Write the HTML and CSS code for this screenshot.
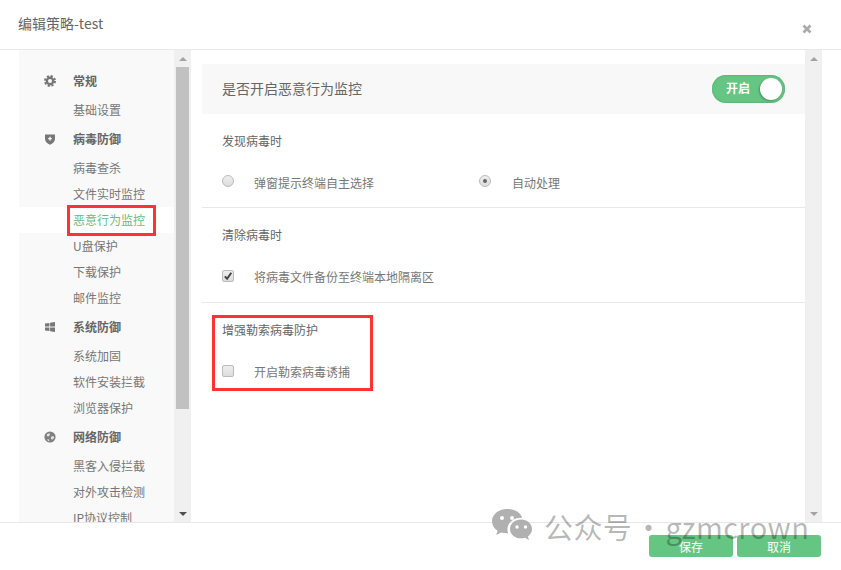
FILE: index.html
```html
<!DOCTYPE html>
<html lang="zh-CN">
<head>
    <meta charset="UTF-8">
    <title>编辑策略-test</title>
    <link rel="stylesheet" href="styles.css">
</head>
<body>
    <div class="dialog">
        <header class="dialog-head">
            <h1>编辑策略-test</h1>
            <svg class="close" viewBox="0 0 10 10" width="10" height="10"><path d="M1.5 1.5l7 7M8.5 1.5l-7 7"/></svg>
        </header>

        <div class="dialog-body">
            <nav class="nav">
                <div class="nav-head">
                    <svg class="nav-icon" viewBox="0 0 12 12"><circle cx="6" cy="6" r="3.2" fill="none" stroke="#777" stroke-width="2.4"/><circle cx="6" cy="6" r="5" fill="none" stroke="#777" stroke-width="2" stroke-dasharray="2.2 1.73"/></svg>
                    常规
                </div>
                <div class="nav-item">基础设置</div>
                <div class="nav-head">
                    <svg class="nav-icon" viewBox="0 0 12 12"><path fill="#777" d="M1 1.6h10v4.2c0 3-2.4 4.8-5 5.9-2.6-1.100-5-2.900-5-5.900z"/><path stroke="#f9f9f9" stroke-width="1.400" d="M6 3.800v3.600M4.200 5.600h3.600"/></svg>
                    病毒防御
                </div>
                <div class="nav-item">病毒查杀</div>
                <div class="nav-item">文件实时监控</div>
                <div class="nav-item active">恶意行为监控</div>
                <div class="nav-item">U盘保护</div>
                <div class="nav-item">下载保护</div>
                <div class="nav-item">邮件监控</div>
                <div class="nav-head">
                    <svg class="nav-icon" viewBox="0 0 12 12"><path fill="#777" d="M1 2.600l4.400-.7v3.700H1zM6.100 1.800l4.900-.8v4.600H6.100zM1 6.400h4.400v3.700L1 9.400zM6.100 6.400H11V11l-4.900-.8z"/></svg>
                    系统防御
                </div>
                <div class="nav-item">系统加固</div>
                <div class="nav-item">软件安装拦截</div>
                <div class="nav-item">浏览器保护</div>
                <div class="nav-head">
                    <svg class="nav-icon" viewBox="0 0 12 12"><circle cx="6" cy="6" r="5.600" fill="#808080"/><path fill="#e4e4e4" d="M3 3.200l2.400-.9.700 1.500-1.600 1.700-1.700-.6zM7 5.800l2.600-.8.500 2-1.900 1.800-1.300-1.200zM3.400 8l1.600.5.300 1.800-1.500-.5z"/></svg>
                    网络防御
                </div>
                <div class="nav-item">黑客入侵拦截</div>
                <div class="nav-item">对外攻击检测</div>
                <div class="nav-item">IP协议控制</div>
            </nav>
            <div class="scrollbar">
                <span class="arrow-up"></span>
                <span class="thumb"></span>
                <span class="arrow-down"></span>
            </div>

            <main class="main">
                <div class="switch-row">
                    <span class="switch-label">是否开启恶意行为监控</span>
                    <div class="switch">
                        <span>开启</span>
                        <i class="knob"></i>
                    </div>
                </div>

                <section class="section">
                    <h2>发现病毒时</h2>
                    <div class="options">
                        <label class="option"><i class="box radio"></i>弹窗提示终端自主选择</label>
                        <label class="option"><i class="box radio on"></i>自动处理</label>
                    </div>
                </section>

                <section class="section tall">
                    <h2>清除病毒时</h2>
                    <div class="options">
                        <label class="option wide">
                            <i class="box"><svg viewBox="0 0 12 12" width="12" height="12"><path d="M2.800 6.400l2.300 2.400 4.200-6" fill="none" stroke="#444" stroke-width="2"/></svg></i>
                            将病毒文件备份至终端本地隔离区
                        </label>
                    </div>
                </section>

                <section class="section last">
                    <h2>增强勒索病毒防护</h2>
                    <div class="options">
                        <label class="option wide"><i class="box"></i>开启勒索病毒诱捕</label>
                    </div>
                </section>
            </main>
            <div class="scrollbar">
                <span class="arrow-up"></span>
                <span class="spacer"></span>
                <span class="arrow-down"></span>
            </div>
        </div>

        <footer class="dialog-foot">
            <button>保存</button>
            <button>取消</button>
        </footer>

        <!-- annotations and watermark sit on top of the screenshot -->
        <div class="mark mark-nav"></div>
        <div class="mark mark-section"></div>
        <div class="watermark">
            <svg viewBox="0 0 40 33" width="40" height="33">
                <path fill="#b0b0b0" d="M15 0C6.700 0 0 5.500 0 12.300c0 3.900 2.200 7.300 5.600 9.500L4.200 26l5-2.600c1.800.5 3.700.8 5.800.8h1.100c-.5-1.300-.7-2.600-.7-3.900 0-6.400 6.200-11.500 13.800-11.500h1C28.600 3.500 22.400 0 15 0z"/>
                <path fill="#b0b0b0" d="M29 10.500c-6.100 0-11 4.200-11 9.400s4.900 9.400 11 9.400c1.400 0 2.700-.2 4-.6l4 2.300-1.100-3.600c2.500-1.700 4.100-4.500 4.100-7.500 0-5.200-4.900-9.400-11-9.400z"/>
                <circle cx="10" cy="9" r="2" fill="#fff"/><circle cx="20" cy="9" r="2" fill="#fff"/>
                <circle cx="25" cy="18" r="1.700" fill="#fff"/><circle cx="33.500" cy="18" r="1.700" fill="#fff"/>
            </svg>
            <span class="watermark-text">公众号 · gzmcrown</span>
        </div>
    </div>
</body>
</html>
```

FILE: styles.css
```css
* {
    box-sizing: border-box;
}
body {
    margin: 0;
    font-family: "Noto Sans CJK SC", "Open Sans", sans-serif;
    font-size: 12px;
    color: #777;
    background: #fff;
}
.dialog {
    position: relative;
    width: 841px;
    height: 570px;
    display: flex;
    flex-direction: column;
    overflow: hidden;
}
.dialog-head {
    height: 50px;
    flex: none;
    border-bottom: 1px solid #e8e8e8;
    padding: 13px 29px 0 18px;
    display: flex;
    justify-content: space-between;
}
.dialog-head h1 {
    margin: 0;
    font-size: 14px;
    font-weight: normal;
    line-height: 20px;
    color: #666;
}
.close {
    margin-top: 11px;
}
.close path {
    stroke: #aaa;
    stroke-width: 2.6;
    fill: none;
}
.dialog-body {
    flex: 1;
    min-height: 0;
    display: flex;
    padding-left: 19px;
    padding-right: 19px;
}
.nav {
    width: 155px;
    flex: none;
    background: #f9f9f9;
    padding-top: 15px;
    overflow: hidden;
}
.nav-head {
    height: 32px;
    display: flex;
    align-items: center;
    padding-left: 25px;
    padding-bottom: 2px;
    font-weight: bold;
    color: #666;
}
.nav-icon {
    width: 12px;
    height: 12px;
    margin-top: 2px;
    margin-right: 17px;
}
.nav-item {
    height: 26px;
    line-height: 26px;
    padding-left: 54px;
    white-space: nowrap;
}
.nav-item.active {
    background: #fff;
    color: #62c07e;
}
.scrollbar {
    width: 17px;
    flex: none;
    background: #f0f0f0;
    display: flex;
    flex-direction: column;
    align-items: center;
}
.arrow-up, .arrow-down {
    flex: none;
    width: 0;
    height: 0;
    border-left: 4px solid transparent;
    border-right: 4px solid transparent;
}
.arrow-up {
    border-bottom: 4px solid #a3a3a3;
    margin: 7px 0 6px;
}
.arrow-down {
    border-top: 4px solid #505050;
    margin: 7px 0 6px;
}
.thumb {
    width: 13px;
    height: 342px;
    background: #c1c1c1;
}
.spacer {
    flex: 1;
}
.scrollbar .spacer + .arrow-down {
    border-top-color: #a3a3a3;
}
.thumb + .arrow-down {
    margin-top: auto;
}
.main {
    flex: 1;
    min-width: 0;
    margin-left: 11px;
    padding-top: 14px;
}
.switch-row {
    height: 50px;
    background: #f8f8f8;
    padding: 0 20px;
    display: flex;
    align-items: center;
    justify-content: space-between;
    font-size: 14px;
    color: #666;
}
.switch-label {
    margin-bottom: 2px;
}
.switch {
    width: 73px;
    height: 28px;
    border-radius: 14px;
    background: #65c582;
    box-shadow: inset 0 0 2px #4a9a62;
    color: #fff;
    font-size: 12px;
    font-weight: bold;
    display: flex;
    align-items: center;
    justify-content: space-between;
    padding: 0 3px 0 14px;
}
.switch span {
    margin-bottom: 4px;
}
.knob {
    width: 22px;
    height: 22px;
    border-radius: 50%;
    background: #fff;
    box-shadow: -1px 1px 2px rgba(0, 0, 0, 0.25);
}
.section {
    padding: 17px 20px 14px;
    border-bottom: 1px solid #e8e8e8;
}
.section.tall {
    padding-bottom: 15px;
}
.section.last {
    border-bottom: none;
}
.section h2 {
    margin: 0;
    font-size: 12px;
    font-weight: normal;
    line-height: 20px;
    color: #666;
}
.options {
    margin-top: 22px;
    display: flex;
}
.option {
    width: 258px;
    height: 20px;
    line-height: 20px;
    display: flex;
}
.option.wide {
    width: auto;
}
.box {
    flex: none;
    width: 12px;
    height: 12px;
    margin: 3px 20px 0 0;
    border: 1px solid #bbb;
    border-radius: 2px;
    background: linear-gradient(#eee, #ddd);
}
.box svg {
    display: block;
    margin: -1px;
}
.radio {
    border-radius: 50%;
    margin-top: 2px;
    position: relative;
}
.radio.on {
    margin-left: -1px;
    margin-right: 21px;
}
.radio.on::after {
    content: "";
    position: absolute;
    left: 3px;
    top: 3px;
    width: 4px;
    height: 4px;
    border-radius: 50%;
    background: #666;
}
.dialog-foot {
    height: 48px;
    flex: none;
    border-top: 1px solid #e8e8e8;
    padding: 12px 20px 0 0;
    display: flex;
    justify-content: flex-end;
    gap: 4px;
}
.dialog-foot button {
    width: 84px;
    height: 22px;
    padding: 0;
    border: none;
    border-radius: 3px;
    background: #65c582;
    color: #fff;
    font-family: inherit;
    font-size: 12px;
}
.mark {
    position: absolute;
    border: 3px solid #ff3333;
}
.mark-nav {
    left: 67px;
    top: 205px;
    width: 89px;
    height: 31px;
}
.mark-section {
    left: 212px;
    top: 315px;
    width: 161px;
    height: 76px;
}
.watermark {
    position: absolute;
    left: 492px;
    top: 509px;
    display: flex;
    align-items: flex-start;
}
.watermark-text {
    margin: -3px 0 0 12px;
    font-size: 29px;
    line-height: 40px;
    letter-spacing: 0.4px;
    word-spacing: -5px;
    color: rgba(0, 0, 0, 0.28);
    white-space: nowrap;
}
```
